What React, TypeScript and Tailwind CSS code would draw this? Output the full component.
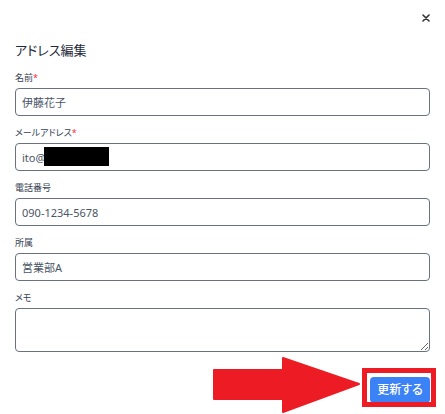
import React, { useState } from "react";

const Field = ({
  label,
  required,
  children,
}: {
  label: string;
  required?: boolean;
  children: React.ReactNode;
}) => (
  <div className="flex flex-col">
    <label className="h-[14px] text-[9px] leading-[14px] text-gray-700">
      {label}
      {required && <span className="text-red-500">*</span>}
    </label>
    <div className="mt-[3px]">{children}</div>
  </div>
);

const inputCls =
  "block w-full h-[28px] px-[6px] rounded-[4px] border border-gray-500 text-[11px] text-gray-600 outline-none bg-white";

export default function App() {
  const [name, setName] = useState("伊藤花子");
  const [phone, setPhone] = useState("090-1234-5678");
  const [dept, setDept] = useState("営業部A");
  const [memo, setMemo] = useState("");

  return (
    <div className="relative w-[445px] h-[414px] bg-white px-[15px] overflow-hidden font-['Noto_Sans','Noto_Sans_CJK_JP',sans-serif] [font-feature-settings:'palt']">
      <div className="flex justify-end h-[36px] items-center">
        <button className="w-[8px] h-[8px] flex items-center justify-center">
          <svg width="8" height="8" viewBox="0 0 8 8">
            <path
              d="M1 1 L7 7 M7 1 L1 7"
              stroke="#333"
              strokeWidth="1.6"
              strokeLinecap="round"
            />
          </svg>
        </button>
      </div>

      <h2 className="mt-[4px] text-[13px] leading-[20px] text-gray-800">
        アドレス編集
      </h2>

      <div className="mt-[11px] flex flex-col gap-[10px]">
        <Field label="名前" required>
          <input
            className={inputCls}
            value={name}
            onChange={(e) => setName(e.target.value)}
          />
        </Field>
        <Field label="メールアドレス" required>
          <div className="relative">
            <input className={inputCls} defaultValue="ito@" />
            {/* redacted part of the address */}
            <div className="absolute left-[29px] top-[4px] w-[65px] h-[19px] bg-black" />
          </div>
        </Field>
        <Field label="電話番号">
          <input
            className={inputCls}
            value={phone}
            onChange={(e) => setPhone(e.target.value)}
          />
        </Field>
        <Field label="所属">
          <input
            className={inputCls}
            value={dept}
            onChange={(e) => setDept(e.target.value)}
          />
        </Field>
        <Field label="メモ">
          <textarea
            className="block w-full h-[44px] px-[6px] py-[4px] rounded-[4px] border border-gray-500 text-[11px] text-gray-600 outline-none"
            value={memo}
            onChange={(e) => setMemo(e.target.value)}
          />
        </Field>
      </div>

      <div className="flex justify-end mt-[25px]">
        <button className="w-[60px] h-[26px] rounded-[4px] bg-[#3b82f6] text-white text-[12px] font-medium">
          更新する
        </button>
      </div>

      {/* annotation: red frame + arrow */}
      <div className="absolute left-[362px] top-[368px] w-[74px] h-[39px] border-[5px] border-[#ed1c24] pointer-events-none" />
      <svg
        className="absolute left-[212px] top-[357px] pointer-events-none"
        width="150"
        height="57"
        viewBox="0 0 150 57"
      >
        <path
          d="M2 13 L71 13 L71 1 L147 27 L71 55 L71 42 L2 42 Z"
          fill="#ed1c24"
          stroke="#ed1c24"
          strokeWidth="2"
          strokeLinejoin="round"
        />
      </svg>
    </div>
  );
}
